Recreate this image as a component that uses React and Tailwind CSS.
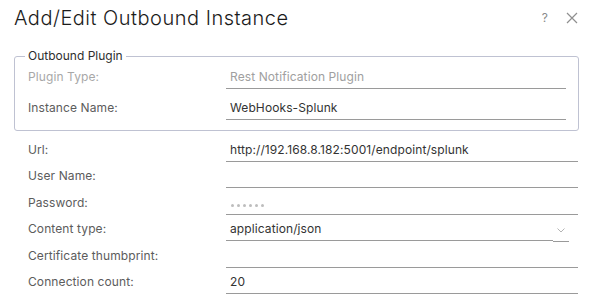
import React from "react";

const font = { fontFamily: "Inter, 'Noto Sans', sans-serif" };

function Row({ label, value, disabled, password, select, className = "" }) {
  return (
    <div className={"flex items-end h-[26.5px] " + className}>
      <div className={"w-[198px] shrink-0 pb-[5px] text-[12px] leading-[14px] tracking-[0.1px] " + (disabled ? "text-[#a8a8a8]" : "text-[#5c5c5c]")}>
        {label}
      </div>
      {select ? (
        <div className="flex flex-1 items-end">
          <div className="flex-1 h-[24px] border-b border-[#9a9a9a] pl-[4px] pb-[4px] flex items-end text-[12px] leading-[14px] tracking-[0.1px] text-[#333333]">
            {value}
          </div>
          <div className="w-[16px] h-[23px] border-b border-[#9a9a9a] flex items-center justify-center translate-y-[1px]">
            <svg width="8" height="5" viewBox="0 0 8 5"><path d="M0.5 0.5 L4 4 L7.5 0.5" fill="none" stroke="#b4b4b4" strokeWidth="1" /></svg>
          </div>
          <div className="w-[9px]" />
        </div>
      ) : password ? (
        <div className="flex-1 h-[24px] border-b border-[#9a9a9a] pl-[5px] pb-[7px] flex items-end gap-[3px]">
          {[0, 1, 2, 3, 4, 5].map((i) => (
            <span key={i} className="w-[3px] h-[3px] rounded-full bg-[#bdbdbd]" />
          ))}
        </div>
      ) : (
        <div
          className={
            "flex-1 h-[24px] border-b border-[#9a9a9a] pl-[4px] pb-[4px] flex items-end text-[12px] leading-[14px] tracking-[0.1px] " +
            (disabled ? "text-[#a0a0a0]" : "text-[#333333]")
          }
        >
          {value}
        </div>
      )}
    </div>
  );
}

export default function App() {
  return (
    <div className="w-[590px] h-[305px] bg-white overflow-hidden relative" style={font}>
      <div className="flex items-center h-[36px] pl-[14px] pr-[10px]">
        <div className="flex-1 text-[20px] font-light text-[#1b1b1b] tracking-[0.5px]">Add/Edit Outbound Instance</div>
        <div className="text-[12px] text-[#8a8a8a] mr-[18px]">?</div>
        <svg width="12" height="12" viewBox="0 0 12 12" className="mr-[2px]">
          <path d="M1 1 L11 11 M11 1 L1 11" stroke="#8f8f8f" strokeWidth="1.2" />
        </svg>
      </div>
      <div className="pl-[14px] pr-[11px] mt-[20px]">
        <div className="relative border border-[#bfc2d2] rounded-[3px] pl-[13px] pr-[12px] pt-[5px] pb-[10px]">
          <div className="absolute left-[10px] top-[-8px] bg-white px-[3px] text-[12px] leading-[14px] text-[#2e2e2e]">Outbound Plugin</div>
          <Row label="Plugin Type:" value="Rest Notification Plugin" disabled className="h-[27px]" />
          <Row label="Instance Name:" value="WebHooks-Splunk" className="h-[31px]" />
        </div>
      </div>
      <div className="pl-[28px] pr-[12px] pt-[4px]">
        <Row label="Url:" value="http://192.168.8.182:5001/endpoint/splunk" className="h-[27px]" />
        <Row label="User Name:" value="" className="h-[26px]" />
        <Row label="Password:" value="" password className="h-[27px]" />
        <Row label="Content type:" value="application/json" select className="h-[26px]" />
        <Row label="Certificate thumbprint:" value="" className="h-[27px]" />
        <Row label="Connection count:" value="20" className="h-[26px]" />
      </div>
    </div>
  );
}
